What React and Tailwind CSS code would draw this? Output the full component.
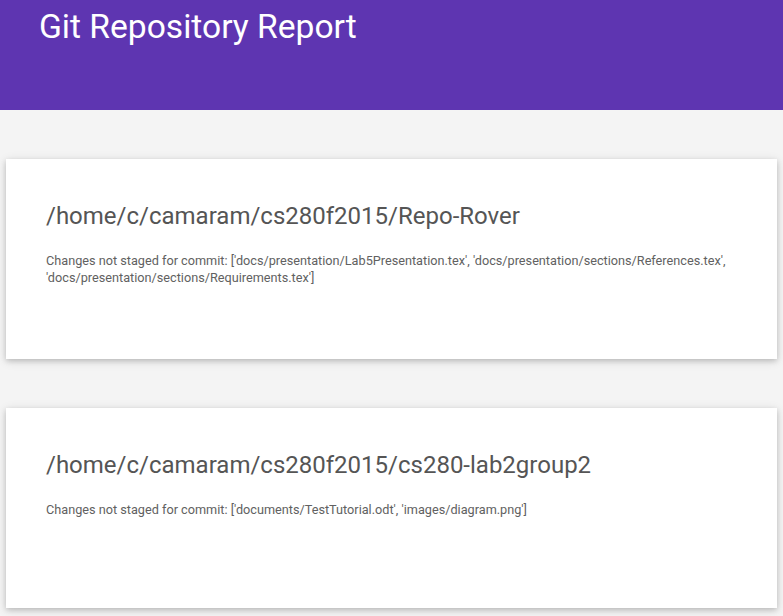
const repos = [
  {
    path: '/home/c/camaram/cs280f2015/Repo-Rover',
    status: "Changes not staged for commit: ['docs/presentation/Lab5Presentation.tex', 'docs/presentation/sections/References.tex', 'docs/presentation/sections/Requirements.tex']",
  },
  {
    path: '/home/c/camaram/cs280f2015/cs280-lab2group2',
    status: "Changes not staged for commit: ['documents/TestTutorial.odt', 'images/diagram.png']",
  },
];

function RepoCard({ path, status }) {
  return (
    <div className="bg-white mx-[6px] min-h-[200px] pt-[45px] px-10 pb-6 shadow-[0_2px_5px_rgba(0,0,0,0.16),0_2px_10px_rgba(0,0,0,0.12)]">
      <h2 className="text-[24px] leading-none text-[#555555]">{path}</h2>
      <p className="mt-[24px] text-[12.7px] leading-[17.3px] text-[#616161]">{status}</p>
    </div>
  );
}

export default function App() {
  return (
    <div className="min-h-[616px] bg-[#f4f4f4] font-['Roboto',sans-serif]">
      {/* Header */}
      <header className="h-[110px] bg-[#5e35b1] pt-[10px] pl-[39px]">
        <h1 className="text-[33.6px] leading-none text-white">Git Repository Report</h1>
      </header>

      <main className="flex flex-col gap-[49px] pt-[49px]">
        {repos.map((r) => (
          <RepoCard key={r.path} path={r.path} status={r.status} />
        ))}
      </main>
    </div>
  );
}
